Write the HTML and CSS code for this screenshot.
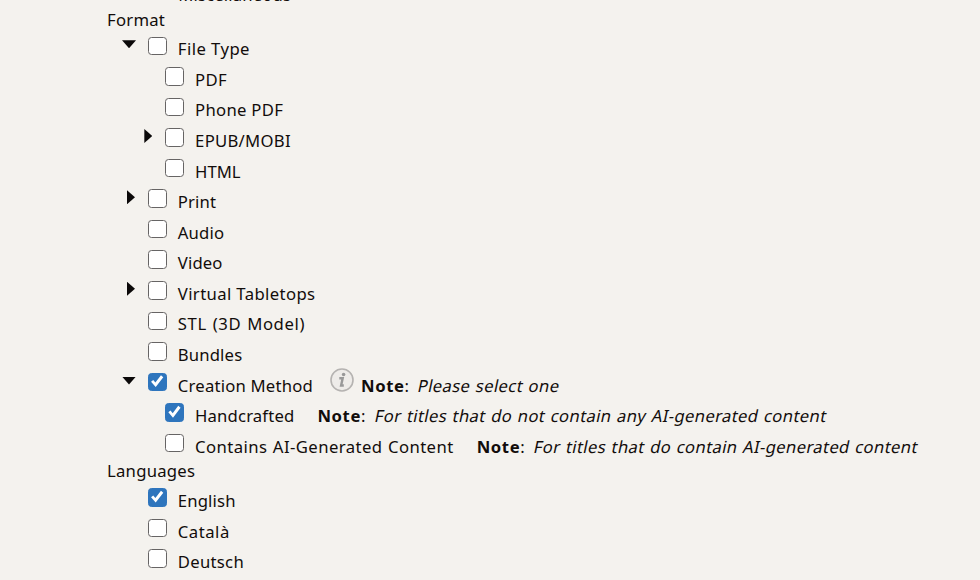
FILE: index.html
```
<!DOCTYPE html>
<html lang="en">
<head>
    <meta charset="UTF-8">
    <title>Title Filters</title>
    <link rel="stylesheet" href="styles.css">
</head>
<body>
    <div class="filters">
        <ul class="tree">
            <li class="row"><span class="arrow"></span><label class="misc">Miscellaneous</label></li>
        </ul>

        <div class="heading format">Format</div>
        <ul class="tree">
            <li>
                <div class="row"><span class="arrow open"></span><input type="checkbox"><label class="file-type">File Type</label></div>
                <ul class="tree nested">
                    <li class="row"><span class="arrow"></span><input type="checkbox"><label class="pdf">PDF</label></li>
                    <li class="row"><span class="arrow"></span><input type="checkbox"><label class="phone">Phone PDF</label></li>
                    <li class="row"><span class="arrow closed"></span><input type="checkbox"><label class="epub">EPUB/MOBI</label></li>
                    <li class="row"><span class="arrow"></span><input type="checkbox"><label class="html">HTML</label></li>
                </ul>
            </li>
            <li class="row"><span class="arrow closed"></span><input type="checkbox"><label class="print">Print</label></li>
            <li class="row"><span class="arrow"></span><input type="checkbox"><label class="audio">Audio</label></li>
            <li class="row"><span class="arrow"></span><input type="checkbox"><label class="video">Video</label></li>
            <li class="row"><span class="arrow closed"></span><input type="checkbox"><label class="virtual">Virtual Tabletops</label></li>
            <li class="row"><span class="arrow"></span><input type="checkbox"><label class="stl">STL (3D Model)</label></li>
            <li class="row"><span class="arrow"></span><input type="checkbox"><label class="bundles">Bundles</label></li>
            <li>
                <div class="row">
                    <span class="arrow open"></span><input type="checkbox" checked><label class="creation">Creation Method</label>
                    <svg class="info" viewBox="0 0 24 24">
                        <circle cx="12" cy="12" r="11" fill="#eeece9" stroke="#b5b3b1" stroke-width="1.6"/>
                        <circle cx="13.6" cy="6.5" r="1.8" fill="#999"/>
                        <path d="M9.3 10.3h3.4l-1.6 7.2h2.7" fill="none" stroke="#999" stroke-width="2.4"/>
                    </svg>
                    <span class="note"><b>Note</b>: <i class="note-select">Please select one</i></span>
                </div>
                <ul class="tree nested">
                    <li class="row"><span class="arrow"></span><input type="checkbox" checked><label class="hand">Handcrafted</label><span class="note spaced"><b>Note</b>: <i class="note-hand">For titles that do not contain any AI-generated content</i></span></li>
                    <li class="row"><span class="arrow"></span><input type="checkbox"><label class="ai">Contains AI-Generated Content</label><span class="note spaced"><b>Note</b>: <i class="note-ai">For titles that do contain AI-generated content</i></span></li>
                </ul>
            </li>
        </ul>

        <div class="heading languages">Languages</div>
        <ul class="tree">
            <li class="row"><span class="arrow"></span><input type="checkbox" checked><label class="english">English</label></li>
            <li class="row"><span class="arrow"></span><input type="checkbox"><label class="catala">Català</label></li>
            <li class="row"><span class="arrow"></span><input type="checkbox"><label class="deutsch">Deutsch</label></li>
            <li class="row"><span class="arrow"></span><input type="checkbox"></li>
        </ul>
    </div>
</body>
</html>
```
FILE: styles.css
```
body {
    margin: 0;
    height: 580px;
    overflow: hidden;
    background-color: #f4f2ee;
    color: #120d0b;
    font-family: Tahoma, "Noto Sans", sans-serif;
    font-size: 16.7px;
}

.filters {
    height: 603px;
    overflow: hidden;
    margin-top: -23px;
    padding-left: 107px;
}

.tree {
    margin: 0;
    padding: 0;
    list-style: none;
}

.nested {
    padding-left: 17.3px;
}

.heading {
    height: 23.8px;
    line-height: 23px;
    letter-spacing: 0.25px;
}

.row {
    display: flex;
    height: 30.57px;
    line-height: 36px;
    white-space: nowrap;
    letter-spacing: 0.15px;
}

.misc {
    margin-left: 30px;
}

.arrow {
    width: 41.2px;
    flex-shrink: 0;
}

.arrow::before {
    content: "";
    display: block;
    background-color: #0b0909;
}

.open::before {
    width: 14px;
    height: 8px;
    margin: 9px 0 0 15px;
    clip-path: polygon(0 0, 100% 0, 50% 100%);
}

.closed::before {
    width: 8px;
    height: 14px;
    margin: 6px 0 0 20px;
    clip-path: polygon(0 0, 100% 50%, 0 100%);
}

input {
    appearance: none;
    box-sizing: border-box;
    width: 18.5px;
    height: 18.5px;
    flex-shrink: 0;
    margin: 5.2px 11.1px 0 0;
    border: 1.5px solid #666464;
    border-radius: 3.5px;
    background-color: #fff;
}

input:checked {
    border-color: #2e75bd;
    background-color: #2e75bd;
}

input:checked::before {
    content: "";
    display: block;
    width: 15.5px;
    height: 15.5px;
    background-color: #fff;
    clip-path: polygon(12% 52%, 26% 40%, 40% 57%, 76% 10%, 91% 22%, 42% 86%);
}

/* labels */
.file-type {
    letter-spacing: 0.45px;
}

.pdf,
.phone,
.epub,
.deutsch {
    letter-spacing: 0.28px;
}

.html {
    letter-spacing: 0;
}

.virtual {
    letter-spacing: 0.38px;
}

.stl {
    letter-spacing: 0.6px;
    word-spacing: 1px;
}

.creation {
    letter-spacing: 0.2px;
}

.ai {
    letter-spacing: 0.42px;
    word-spacing: 0.7px;
}

.catala {
    letter-spacing: 0.5px;
}

.info {
    width: 24px;
    height: 24px;
    margin: 0 7px 0 17px;
}

.note b {
    letter-spacing: 0.6px;
}

/* slanted upright face, so the double-storey a stays */
.note i {
    display: inline-block;
    margin-left: 4.5px;
    font-style: normal;
    transform: skewX(-12deg);
    letter-spacing: 0.33px;
    word-spacing: 0.9px;
}

.spaced {
    margin-left: 23px;
}
```
